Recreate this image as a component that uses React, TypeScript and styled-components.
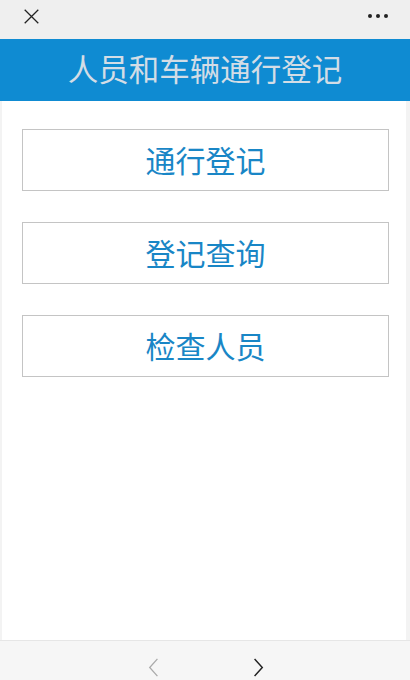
import styled, { createGlobalStyle } from 'styled-components';

const GlobalStyle = createGlobalStyle`
  html, body {
    margin: 0;
    padding: 0;
    background: #ffffff;
  }
  body {
    font-family: "Noto Sans CJK SC", "Noto Sans", sans-serif;
  }
`;

const menuItems = ['通行登记', '登记查询', '检查人员'];

const App = () => {
  return (
    <>
      <GlobalStyle />
      <Page>
        <TopBar>
          <CloseIcon viewBox="0 0 20 20">
            <path d="M2 2 L18 18 M18 2 L2 18" stroke="#222" strokeWidth="1.5" fill="none" />
          </CloseIcon>
          <MoreDots>
            <Dot />
            <Dot />
            <Dot />
          </MoreDots>
        </TopBar>
        <Header>
          <HeaderTitle>人员和车辆通行登记</HeaderTitle>
        </Header>
        <Content>
          {menuItems.map((item) => (
            <MenuButton key={item}>{item}</MenuButton>
          ))}
        </Content>
        <BottomBar>
          <NavArrow viewBox="0 0 14 24" disabled>
            <path d="M11 2 L2 12 L11 22" stroke="#aaa" strokeWidth="1.5" fill="none" />
          </NavArrow>
          <NavArrow viewBox="0 0 14 24">
            <path d="M3 2 L12 12 L3 22" stroke="#222" strokeWidth="1.7" fill="none" />
          </NavArrow>
        </BottomBar>
      </Page>
    </>
  );
};

export default App;

const Page = styled.div`
  width: 410px;
  height: 680px;
  display: flex;
  flex-direction: column;
  overflow: hidden;
`;

const TopBar = styled.div`
  height: 39px;
  flex-shrink: 0;
  background: #efefef;
  display: flex;
  align-items: center;
  justify-content: space-between;
  padding: 0 22px 0 23px;
  box-sizing: border-box;
`;

const CloseIcon = styled.svg`
  width: 17px;
  height: 17px;
  margin-top: -6px;
`;

const MoreDots = styled.div`
  display: flex;
  gap: 4px;
  margin-top: -8px;
`;

const Dot = styled.span`
  width: 4px;
  height: 4px;
  border-radius: 50%;
  background: #222;
`;

const Header = styled.div`
  height: 62px;
  flex-shrink: 0;
  background: #0f8bd2;
  display: flex;
  align-items: center;
  justify-content: center;
`;

const HeaderTitle = styled.h1`
  margin: 0;
  font-size: 30.5px;
  font-weight: 400;
  color: #d3dde6;
  letter-spacing: 0;
  transform: translateY(-2px);
`;

const Content = styled.div`
  flex: 1;
  display: flex;
  flex-direction: column;
  gap: 31px;
  padding: 28px 17px 0 22px;
  border-left: 2px solid #f3f3f3;
  border-right: 4px solid #f3f3f3;
  background: #ffffff;
  box-sizing: border-box;
`;

const MenuButton = styled.button`
  height: 62px;
  margin-left: -2px;
  border: 1px solid #c4c4c4;
  background: #ffffff;
  font-family: "Noto Sans CJK SC", "Noto Sans", sans-serif;
  font-size: 30px;
  line-height: 1;
  color: #1986c6;
  cursor: pointer;
  padding: 0 0 3px;
`;

const BottomBar = styled.div`
  height: 40px;
  flex-shrink: 0;
  background: #f6f6f6;
  border-top: 1px solid #e6e6e6;
  display: flex;
  align-items: flex-end;
  justify-content: center;
  gap: 92px;
  box-sizing: border-box;
  padding: 0 0 2px 2px;
`;

const NavArrow = styled.svg<{ disabled?: boolean }>`
  width: 12px;
  height: 21px;
  cursor: ${({ disabled }) => (disabled ? 'default' : 'pointer')};
`;
